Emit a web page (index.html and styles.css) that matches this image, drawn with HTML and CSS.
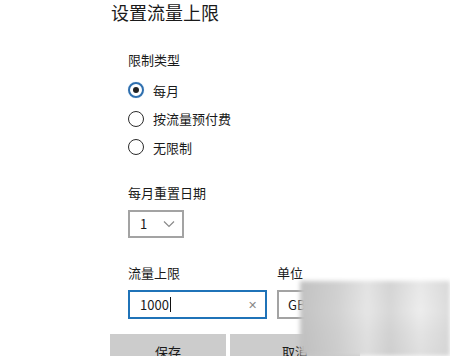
FILE: index.html
```html
<!DOCTYPE html>
<html lang="zh-CN">
<head>
<meta charset="utf-8">
<link rel="stylesheet" href="styles.css">
</head>
<body>
<div class="page">
  <h1 class="title">设置流量上限</h1>
  <div class="form">
    <div class="label first">限制类型</div>
    <div class="radios">
      <div class="radio-row"><span class="radio checked"></span><span>每月</span></div>
      <div class="radio-row"><span class="radio"></span><span>按流量预付费</span></div>
      <div class="radio-row"><span class="radio"></span><span>无限制</span></div>
    </div>
    <div class="label">每月重置日期</div>
    <div class="select">
      <span>1</span>
      <svg class="chev" width="12" height="8" viewBox="0 0 12 8"><path d="M1 1.5 L6 6.5 L11 1.5" fill="none" stroke="#8a8a8a" stroke-width="1.2"/></svg>
    </div>
    <div class="pair">
      <div class="col">
        <div class="label">流量上限</div>
        <div class="input"><span class="val">1000</span><span class="caret"></span><span class="clear">✕</span></div>
      </div>
      <div class="col">
        <div class="label">单位</div>
        <div class="unit">GB</div>
      </div>
    </div>
  </div>
  <div class="buttons">
    <div class="btn save">保存</div>
    <div class="btn cancel">取消</div>
  </div>
  <div class="smudge"></div>
</div>
</body>
</html>
```
FILE: styles.css
```css
html, body { margin: 0; padding: 0; background: #fff; }
body {
  font-family: "Noto Sans CJK SC", "Noto Sans", sans-serif;
  color: #1a1a1a;
  width: 450px;
  height: 356px;
  overflow: hidden;
}
.page { position: relative; width: 450px; height: 356px; padding-left: 110px; box-sizing: border-box; }
.title {
  margin: 0;
  font-size: 18px;
  font-weight: 400;
  line-height: 24px;
  height: 24px;
  padding-left: 1px;
}
.form { padding-left: 18px; }
.label { font-size: 13px; line-height: 20px; height: 20px; margin-top: 21px; }
.label.first { margin-top: 26px; }
.radios { margin-top: 6px; }
.radio-row { display: flex; align-items: center; height: 28.5px; font-size: 13px; gap: 9px; }
.radio {
  width: 16px; height: 16px; box-sizing: border-box;
  border: 1.5px solid #2b2b2b; border-radius: 50%;
  display: flex; align-items: center; justify-content: center;
}
.radio.checked { border: 2px solid #2f6fae; box-shadow: 0 0 1px #9cc8ee; }
.radio.checked::after { content: ""; width: 6px; height: 6px; border-radius: 50%; background: #222; }
.select {
  margin-top: 7px;
  width: 56px; height: 28px; box-sizing: border-box;
  border: 2px solid #a3a3a3;
  display: flex; align-items: center; justify-content: space-between;
  padding: 0 7px 0 10px;
  font-size: 13px;
}
.pair { display: flex; gap: 10px; }
.pair .label { margin-top: 25px; }
.input {
  margin-top: 7px;
  width: 139px; height: 29px; box-sizing: border-box;
  border: 2px solid #1f73b8;
  display: flex; align-items: center;
  padding: 0 8px 0 10px;
  font-size: 13px;
}
.caret { width: 1px; height: 15px; background: #111; margin-left: 1px; }
.clear { margin-left: auto; color: #888; font-size: 11px; }
.unit {
  margin-top: 7px;
  width: 70px; height: 29px; box-sizing: border-box;
  border: 2px solid #a3a3a3;
  display: flex; align-items: center; padding-left: 9px;
  font-size: 13px;
}
.buttons { display: flex; gap: 4px; margin-top: 15px; }
.btn {
  width: 116px; height: 32px; background: #cccccc;
  display: flex; justify-content: center; padding-top: 10px; box-sizing: border-box;
  font-size: 13px; line-height: 16px;
}
.cancel { width: 130px; }
.smudge {
  position: absolute; left: 300px; top: 281px; width: 150px; height: 75px;
  background:
    linear-gradient(90deg, rgba(190,190,190,0.9) 0%, rgba(205,205,205,0.85) 25%, rgba(228,228,228,0.75) 45%, rgba(208,208,208,0.75) 60%, rgba(238,238,238,0.6) 80%, rgba(215,215,215,0.8) 100%),
    linear-gradient(180deg, #dedede 0%, #ececec 40%, #d4d4d4 70%, #c8c8c8 100%);
  filter: blur(2px);
}
```
